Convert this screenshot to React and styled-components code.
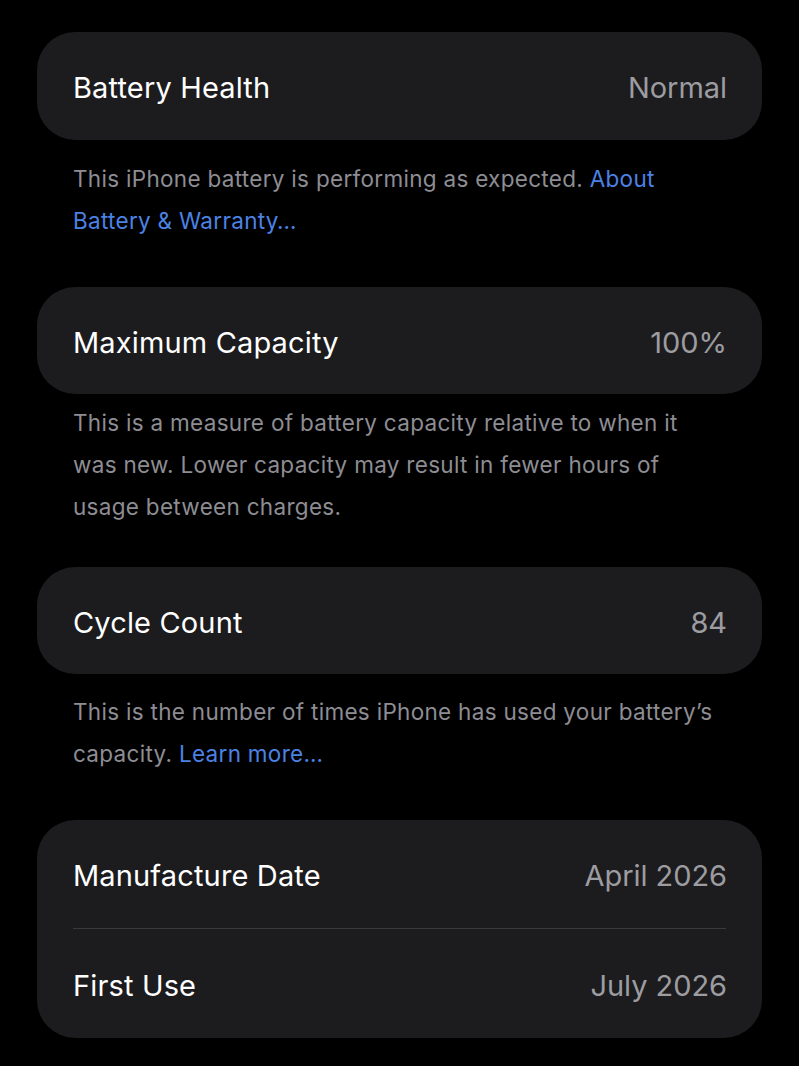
import React from "react";
import styled, { createGlobalStyle } from "styled-components";

const Global = createGlobalStyle`
  html, body { margin: 0; padding: 0; background: #000; }
  body { font-family: Inter, "Noto Sans", "Liberation Sans", sans-serif; -webkit-font-smoothing: antialiased; }
`;

const Page = styled.div`
  background: #000;
  min-height: 1066px;
  padding: 32px 37px 0 37px;
  box-sizing: border-box;
`;

const Card = styled.div`
  background: #1c1c1e;
  border-radius: 38px;
  display: flex;
  flex-direction: column;
  padding: 0 36px 0 36px;
`;

const Row = styled.div`
  height: ${(p) => p.$h || 108}px;
  box-sizing: border-box;
  padding-top: 3px;
  display: flex;
  align-items: center;
  justify-content: space-between;
  border-top: ${(p) => (p.$divider ? "1px solid #3a3a3c" : "none")};
`;

const Label = styled.span`
  color: #ffffff;
  font-size: 29px;
  letter-spacing: 0.15px;
`;

const Value = styled.span`
  color: #9c9ca1;
  font-size: 29px;
  letter-spacing: -0.05px;
  margin-right: -1px;
`;

const Footer = styled.p`
  margin: 0;
  padding: ${(p) => p.$pt}px 36px ${(p) => p.$pb}px 36px;
  color: #8d8d93;
  font-size: 22.5px;
  line-height: 42px;
  letter-spacing: 0.3px;
`;

const Link = styled.a`
  color: #4c82e4;
  text-decoration: none;
`;

export default function App() {
  return (
    <>
      <Global />
      <Page>
        <Card>
          <Row>
            <Label>Battery Health</Label>
            <Value>Normal</Value>
          </Row>
        </Card>
        <Footer $pt={18} $pb={45}>
          This iPhone battery is performing as expected. <Link>About Battery &amp; Warranty…</Link>
        </Footer>
        <Card>
          <Row $h={107}>
            <Label>Maximum Capacity</Label>
            <Value>100%</Value>
          </Row>
        </Card>
        <Footer $pt={8} $pb={39}>
          This is a measure of battery capacity relative to when it was new. Lower capacity may result in fewer hours of usage between charges.
        </Footer>
        <Card>
          <Row $h={107}>
            <Label>Cycle Count</Label>
            <Value>84</Value>
          </Row>
        </Card>
        <Footer $pt={17} $pb={45}>
          This is the number of times iPhone has used your battery’s capacity. <Link>Learn more…</Link>
        </Footer>
        <Card>
          <Row $h={108}>
            <Label>Manufacture Date</Label>
            <Value>April 2026</Value>
          </Row>
          <Row $h={110} $divider>
            <Label>First Use</Label>
            <Value>July 2026</Value>
          </Row>
        </Card>
      </Page>
    </>
  );
}
